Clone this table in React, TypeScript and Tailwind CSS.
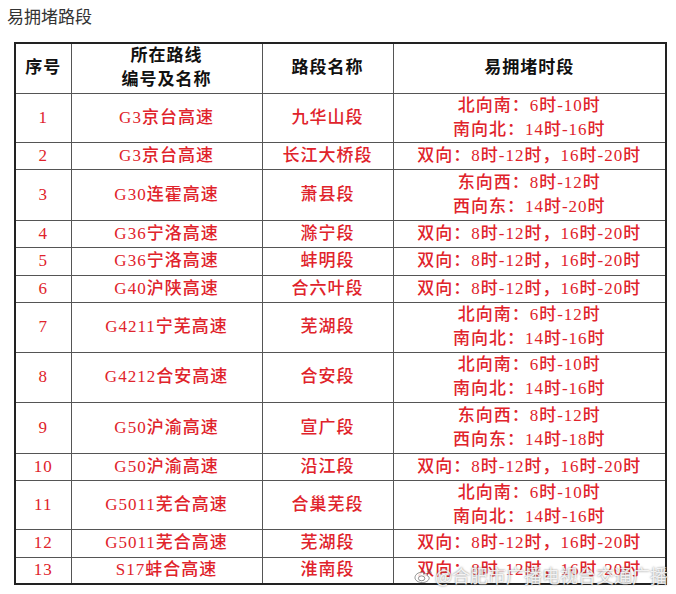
import React from "react";

type Row = { no: string; road: string; seg: string; times: string[]; h: string };

const BOTH = "双向：8时-12时，16时-20时";

const rows: Row[] = [
  { no: "1", road: "G3京台高速", seg: "九华山段", times: ["北向南：6时-10时", "南向北：14时-16时"], h: "h-[49px]" },
  { no: "2", road: "G3京台高速", seg: "长江大桥段", times: [BOTH], h: "h-[27px]" },
  { no: "3", road: "G30连霍高速", seg: "萧县段", times: ["东向西：8时-12时", "西向东：14时-20时"], h: "h-[51px]" },
  { no: "4", road: "G36宁洛高速", seg: "滁宁段", times: [BOTH], h: "h-[27px]" },
  { no: "5", road: "G36宁洛高速", seg: "蚌明段", times: [BOTH], h: "h-[28px]" },
  { no: "6", road: "G40沪陕高速", seg: "合六叶段", times: [BOTH], h: "h-[27px]" },
  { no: "7", road: "G4211宁芜高速", seg: "芜湖段", times: ["北向南：6时-12时", "南向北：14时-16时"], h: "h-[50px]" },
  { no: "8", road: "G4212合安高速", seg: "合安段", times: ["北向南：6时-10时", "南向北：14时-16时"], h: "h-[50px]" },
  { no: "9", road: "G50沪渝高速", seg: "宣广段", times: ["东向西：8时-12时", "西向东：14时-18时"], h: "h-[51px]" },
  { no: "10", road: "G50沪渝高速", seg: "沿江段", times: [BOTH], h: "h-[27px]" },
  { no: "11", road: "G5011芜合高速", seg: "合巢芜段", times: ["北向南：6时-10时", "南向北：14时-16时"], h: "h-[49px]" },
  { no: "12", road: "G5011芜合高速", seg: "芜湖段", times: [BOTH], h: "h-[28px]" },
  { no: "13", road: "S17蚌合高速", seg: "淮南段", times: [BOTH], h: "h-[27px]" },
];

const cell = "border border-[#555] text-center align-middle p-0";

function WeiboLogo() {
  return (
    <svg width="19" height="17" viewBox="0 0 20 18" className="shrink-0">
      <path
        d="M8.5 5.5C4.5 5.5 1 8 1 11.2 1 14.3 4.6 16.5 8.6 16.5c4.6 0 7.4-2.6 7.4-4.8 0-1.5-1.3-2.2-2.3-2.5.5-1.4.2-2.4-1.8-2.1-1 .2-1.8.6-1.8.6.3-1.2-.3-2.2-1.6-2.2z"
        fill="rgba(255,255,255,0.85)"
        stroke="rgba(90,90,90,0.7)"
        strokeWidth="1"
      />
      <ellipse cx="8" cy="12" rx="3.4" ry="2.6" fill="none" stroke="rgba(90,90,90,0.7)" strokeWidth="1" />
      <path d="M14 2.5a4 4 0 0 1 4 4.5M13.6 4.5a2 2 0 0 1 2.4 2.3" fill="none" stroke="rgba(90,90,90,0.7)" strokeWidth="1" />
    </svg>
  );
}

export default function App() {
  return (
    <div
      className="relative w-[676px] h-[594px] bg-white overflow-hidden"
      style={{ fontFamily: '"Liberation Serif", "Noto Sans CJK SC", serif' }}
    >
      <div
        className="pl-[7px] pt-[3px] h-[42px] text-[17px] leading-[26px] text-[#333]"
        style={{ fontFamily: '"Noto Sans CJK SC", sans-serif' }}
      >
        易拥堵路段
      </div>

      <table className="ml-[14px] border-collapse border-2 border-[#222] table-fixed w-[651px] text-[17px] tracking-[1px]">
        <colgroup>
          <col className="w-[56px]" />
          <col className="w-[191px]" />
          <col className="w-[131px]" />
          <col className="w-[273px]" />
        </colgroup>
        <thead>
          <tr className="h-[50px] text-[#111] font-bold leading-[24px]">
            <th className={cell}>序号</th>
            <th className={cell}>
              所在路线
              <br />
              编号及名称
            </th>
            <th className={cell}>路段名称</th>
            <th className={cell}>易拥堵时段</th>
          </tr>
        </thead>
        <tbody className="text-[#e0232b] font-medium leading-[24px]">
          {rows.map((r) => (
            <tr key={r.no} className={r.h}>
              <td className={cell}>{r.no}</td>
              <td className={cell}>{r.road}</td>
              <td className={cell}>{r.seg}</td>
              <td className={cell}>
                {r.times.map((t) => (
                  <div key={t}>{t}</div>
                ))}
              </td>
            </tr>
          ))}
        </tbody>
      </table>

      <div
        className="absolute left-[414px] top-[563px] flex items-center gap-[2px] text-[18px] leading-[24px] text-white/85 [text-shadow:0_0_2px_rgba(60,60,60,0.7)]"
        style={{ fontFamily: '"Noto Sans CJK SC", sans-serif' }}
      >
        <WeiboLogo />
        <span>@合肥市广播电视台交通广播</span>
      </div>
    </div>
  );
}
